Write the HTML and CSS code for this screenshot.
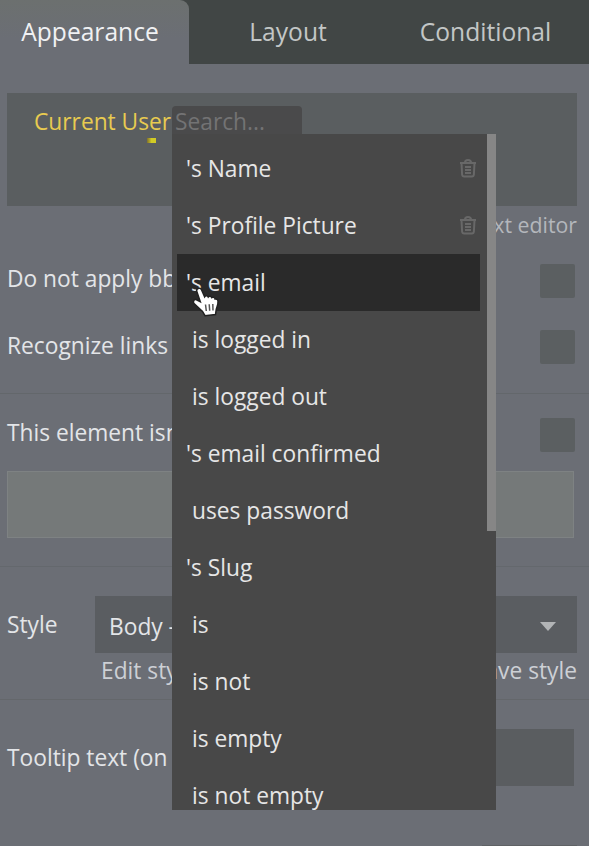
FILE: index.html
```html
<!DOCTYPE html>
<html lang="en">
<head>
<meta charset="utf-8">
<title>Property editor</title>
<link rel="stylesheet" href="styles.css">
</head>
<body>
<nav class="tabs">
  <div class="tab active"><span>Appearance</span></div>
  <div class="tab"><span>Layout</span></div>
  <div class="tab"><span>Conditional</span></div>
</nav>
<main class="panel">
  <div class="composer"><span class="token">Current User</span></div>
  <div class="editor-link">Rich text editor</div>
  <div class="row check-row"><span>Do not apply bb</span><i class="checkbox"></i></div>
  <div class="row check-row second"><span>Recognize links</span><i class="checkbox"></i></div>
  <div class="row check-row third"><span>This element isn't</span><i class="checkbox"></i></div>
  <div class="workflow"></div>
  <div class="row style-row">
    <span>Style</span>
    <div class="select"><span>Body -</span><i class="caret"></i></div>
  </div>
  <div class="style-links"><span class="edit">Edit style</span><span>Save style</span></div>
  <div class="row tooltip-row"><span>Tooltip text (on</span><div class="input"></div></div>
  <div class="next-row"><div class="next-input"></div></div>
</main>
<i class="mark"></i>
<div class="search"><span>Search...</span></div>
<div class="menu">
  <ul class="list">
    <li>'s Name<svg class="trash" viewBox="0 0 18 20"><path d="M1 5h16M6 4.500Q6 2 9 2t3 2.500M2.500 5l.6 11.500q.2 2 2 2h7.800q1.800 0 2-2L15.500 5M6 9h6M6 12h6M6 15h6"/></svg></li>
    <li>'s Profile Picture<svg class="trash" viewBox="0 0 18 20"><path d="M1 5h16M6 4.500Q6 2 9 2t3 2.500M2.500 5l.6 11.500q.2 2 2 2h7.800q1.800 0 2-2L15.500 5M6 9h6M6 12h6M6 15h6"/></svg></li>
    <li class="hover">'s email</li>
    <li class="op">is logged in</li>
    <li class="op">is logged out</li>
    <li>'s email confirmed</li>
    <li class="op">uses password</li>
    <li>'s Slug</li>
    <li class="op">is</li>
    <li class="op">is not</li>
    <li class="op">is empty</li>
    <li class="op">is not empty</li>
  </ul>
  <div class="thumb"></div>
</div>
<svg class="cursor" viewBox="0 0 32 34"><path class="hand" d="M8 3.500c1.600-.9 3 .1 3.600 1.500l3 6.800c.8-1.500 3-1.300 3.600.2.900-1.300 3-.8 3.500.6 1.200-1 3.200-.2 3.400 1.400 1.600-.3 2.800.7 2.900 2.300.3 3.300-1.200 5.600-1.800 8.300L25.500 29.500l-10.500 1.200-2.500-4.300-8.200-7.500c-1.600-1.500-.9-4.800 1.700-4.400l4.300 2.200L6.800 6.500c-.4-1.200 0-2.400 1.200-3z"/><path class="lines" d="M15.500 19.500l.8 6.500M19.200 19.300l.5 6.500M22.800 19l.2 6.500"/></svg>
</body>
</html>
```

FILE: styles.css
```css
* { box-sizing: border-box; }
body {
  margin: 0;
  position: relative;
  width: 589px;
  height: 846px;
  overflow: hidden;
  background: #6b6e75;
  color: #e3e5e8;
  font: 500 22.75px/30px "Open Sans", sans-serif;
  white-space: nowrap;
}
.tabs {
  display: grid;
  grid-template-columns: 189px 198px 202px;
  height: 64px;
  background: #414645;
}
.tab {
  display: flex;
  justify-content: center;
  align-items: center;
  font-size: 24.6px;
  color: #c3c6c6;
}
.tab:last-child { padding-right: 5px; }
.tab.active {
  background: linear-gradient(#6c706f, #6b6e75 60%);
  color: #f0f1f3;
  border-top-right-radius: 9px;
  padding-right: 9px;
}
.panel { padding: 29px 12px 0 7px; }
.composer {
  height: 113px;
  background: #5a5e60;
  padding: 14px 27px;
}
.token { color: #e8cb50; }
.editor-link {
  height: 38px;
  line-height: 38px;
  font-size: 21.3px;
  font-weight: 400;
  text-align: right;
  color: #b4b7bc;
}
.row { display: flex; }
.check-row {
  height: 86px;
  padding: 20px 2px 0 0;
  justify-content: space-between;
}
.check-row > span { line-height: 30px; }
.checkbox { width: 35px; height: 34px; background: #5b5f61; border-radius: 2px; }
.second { height: 63px; padding-top: 0; }
.second > span { line-height: 32px; }
.third { border-top: 1px solid #63676b; margin: 0 -12px 0 -7px; padding: 24px 14px 0 7px; height: 78px; }
.workflow {
  height: 67px;
  margin-right: 3px;
  background: #757979;
  border: 1px solid #7e8283;
}
.style-row {
  margin: 28px -12px 0 -7px;
  padding: 29px 12px 0 7px;
  border-top: 1px solid #64686d;
}
.style-row > span { width: 88px; padding-top: 14px; }
.select {
  flex: 1;
  height: 57px;
  display: flex;
  align-items: center;
  justify-content: space-between;
  background: #5a5d61;
  padding: 4px 21px 0 14px;
}
.caret { border: 8px solid transparent; border-top: 9px solid #b2b4b6; border-bottom: 0; }
.style-links {
  height: 46px;
  display: flex;
  justify-content: space-between;
  padding: 3px 0 0 94px;
  color: #cdd0d5;
}
.tooltip-row {
  margin: 0 -12px 0 -7px;
  padding: 29px 15px 0 7px;
  height: 116px;
  border-top: 1px solid #64676b;
  justify-content: space-between;
}
.tooltip-row > span { padding-top: 14px; }
.input { width: 200px; height: 57px; background: #5a5d60; }
.next-row { height: 31px; padding-top: 30px; display: flex; justify-content: flex-end; }
.next-input { width: 95px; height: 1px; background: #5f6265; }
.mark { position: absolute; left: 147px; top: 138px; width: 9px; height: 5px; background: linear-gradient(90deg, #80702d, #d1cb25 50%); }
.search {
  position: absolute;
  left: 172px;
  top: 106px;
  width: 130px;
  height: 29px;
  border-radius: 4px 4px 0 0;
  background: #4a4a4b;
  padding: 1px 0 0 3px;
  color: #737374;
}
.menu {
  position: absolute;
  left: 172px;
  top: 134px;
  width: 324px;
  height: 676px;
  overflow: hidden;
  background: #484848;
  padding: 6px 0 0 5px;
}
.list { list-style: none; margin: 0; padding: 0; width: 303px; }
.list li {
  display: flex;
  justify-content: space-between;
  align-items: center;
  height: 57px;
  padding: 0 3px 0 9px;
  color: #e6e6e6;
}
.list li.op { padding-left: 15px; }
.list .hover { background: #2a2a2a; }
.trash { width: 18px; height: 20px; margin-top: -1px; fill: none; stroke: #686868; stroke-width: 2; }
.thumb { position: absolute; right: 0; top: 0; width: 9px; height: 397px; background: #868686; }
.cursor { position: absolute; left: 190px; top: 285px; width: 32px; height: 34px; }
.hand { fill: #fff; stroke: #222; stroke-width: 1.5; }
.lines { stroke: #555; stroke-width: 1.5; fill: none; }
```
